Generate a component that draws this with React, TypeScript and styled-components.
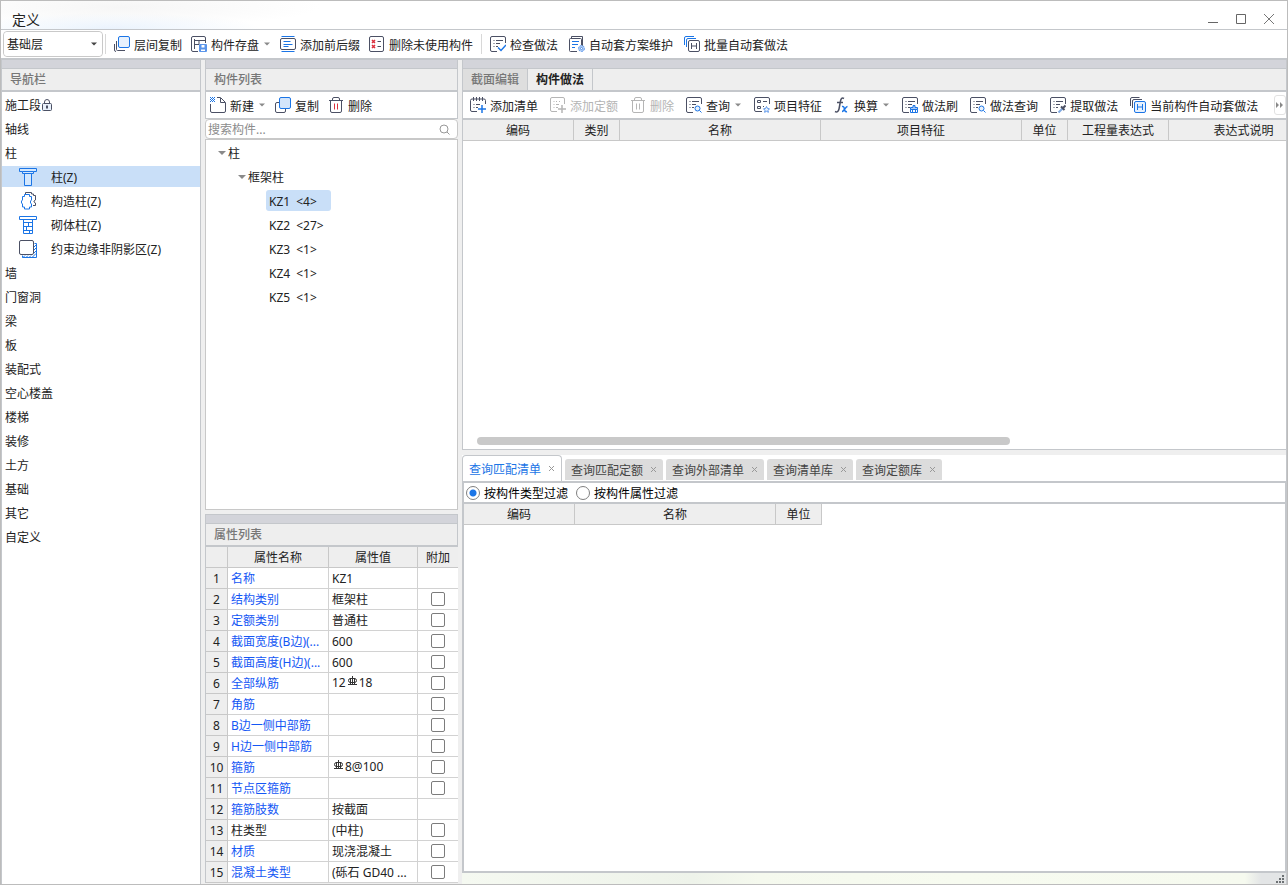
import React, { useState } from 'react';
import styled, { createGlobalStyle, css } from 'styled-components';

const ink = '#4b5064';
const blue = '#1b75e6';
const pale = '#d3e5fb';
const line = '#c4c7cb';
const grid = '#c8c8c8';
const panel = '#eeeeee';

const GlobalStyle = createGlobalStyle`
  *, *::before, *::after { box-sizing: border-box; }
  body {
    margin: 0;
    background: #fff;
    color: #222;
    font: 12px/20px "Noto Sans", "Noto Sans CJK SC", sans-serif;
  }
  button, input, select { font: inherit; color: inherit; }
  button { border: 0; padding: 0; background: none; cursor: pointer; white-space: nowrap; }
  ul { list-style: none; margin: 0; padding: 0; }
`;

/* ---------- window frame ---------- */

const Frame = styled.div`
  display: flex;
  flex-direction: column;
  min-height: 100vh;
  border: 1px solid #bcbcbc;
`;

const TitleBar = styled.header`
  display: flex;
  justify-content: space-between;
  align-items: flex-end;
  height: 29px;
  padding: 0 10px 0 11px;
  border-bottom: 1px solid ${line};
  background:
    radial-gradient(ellipse 150px 16px at 110px 28px, #eaf3fd, transparent),
    radial-gradient(ellipse 200px 20px at 120px 6px, #f6f6f6, transparent),
    #fff;
`;

const Title = styled.h1`
  margin: 0;
  font-size: 14px;
  line-height: 18px;
  font-weight: 400;
`;

const WindowButtons = styled.div`
  display: flex;
  gap: 12px;
  padding-bottom: 2px;
`;

const WindowButton = styled.button`
  display: grid;
  place-items: center;
  width: 16px;
  height: 16px;
`;

const Toolbar = styled.div<{ $height: number; $gap: number; $rule?: number; $pad: number }>`
  display: flex;
  align-items: center;
  flex: none;
  gap: ${(p) => p.$gap}px;
  height: ${(p) => p.$height}px;
  padding-left: ${(p) => p.$pad}px;
  border-bottom: ${(p) => p.$rule ?? 2}px solid ${line};
  background: #fff;
  overflow: hidden;
`;

const ToolGroup = styled.div<{ $gap: number }>`
  display: flex;
  gap: ${(p) => p.$gap}px;
  padding: 0 8px;
  border-left: 1px solid #d8d8d8;
`;

const Tool = styled.button`
  display: flex;
  align-items: center;
  flex: none;
  gap: 4px;
  height: 20px;
  &:disabled { color: #b4b4b4; cursor: default; }
  &:disabled svg { filter: grayscale(1); opacity: 0.42; }
`;

const ToolLabel = styled.span`
  padding-top: 3px;
`;

const Overflow = styled.button`
  display: grid;
  place-items: center;
  flex: none;
  width: 12px;
  height: 20px;
  margin-left: auto;
  border: 1px solid #e2e2e2;
  border-radius: 3px;
`;

const FloorPicker = styled.div`
  display: grid;
  align-items: center;
  width: 100px;
  height: 26px;
  border: 1px solid #c9c9c9;
  border-radius: 4px;
  margin-right: 2px;
  & > * { grid-area: 1 / 1; }
  & > svg { justify-self: end; margin-right: 4px; pointer-events: none; }
`;

const FloorSelect = styled.select`
  appearance: none;
  width: 100%;
  height: 24px;
  padding: 2px 3px 0;
  border: 0;
  border-radius: 4px;
  background: #fff;
`;

const Workspace = styled.main`
  display: grid;
  grid-template-columns: 199px 253px minmax(0, 1fr);
  column-gap: 4px;
  flex: 1;
  border: solid ${line};
  border-width: 0 1px;
  background: #efefef;
`;

const Column = styled.div`
  display: flex;
  flex-direction: column;
  min-width: 0;
`;

const Panel = styled.section<{ $grow?: number }>`
  display: flex;
  flex-direction: column;
  flex: ${(p) => (p.$grow ? `${p.$grow} 1 0` : 'none')};
  min-width: 0;
`;

const Strip = styled.div`
  flex: none;
  height: 9px;
  background: #d3d4da;
  border-bottom: 1px solid ${line};
`;

const PanelTitle = styled.h2`
  flex: none;
  height: 23px;
  margin: 0;
  padding-left: 8px;
  border-bottom: 2px solid ${line};
  background: ${panel};
  color: #777;
  font-size: 12px;
  line-height: 22px;
  font-weight: 500;
`;

/* ---------- navigation ---------- */

const NavPanel = styled(Panel)`
  border-right: 1px solid ${line};
  background: #fff;
`;

const NavList = styled.ul`
  padding-top: 1px;
`;

const Row = styled.li`
  display: flex;
  height: 24px;
  padding: 1px 0 2px;
`;

const NavItem = styled.button<{ $child?: boolean; $selected?: boolean }>`
  display: flex;
  align-items: center;
  width: 100%;
  padding-left: ${(p) => (p.$child ? 17 : 3)}px;
  gap: ${(p) => (p.$child ? 14 : 0)}px;
  background: ${(p) => (p.$selected ? '#c9dff8' : 'transparent')};
`;

const RowLabel = styled.span`
  padding-top: 2px;
`;

/* ---------- component list ---------- */

const Bordered = styled.div`
  border: solid ${line};
  border-width: 0 1px;
`;

const SearchBox = styled.label`
  display: flex;
  align-items: center;
  height: 20px;
  padding: 0 7px 0 2px;
  border: 1px solid ${grid};
  border-radius: 4px;
  background: #fff;
`;

const SearchInput = styled.input`
  flex: 1;
  min-width: 0;
  height: 18px;
  padding: 2px 0 0;
  border: 0;
  outline: 0;
  background: none;
  &::placeholder { color: #8c8c8c; opacity: 1; }
`;

const TreeArea = styled.div`
  flex: 1;
  padding-top: 1px;
  border: 1px solid ${grid};
  background: #fff;
`;

const TreeRow = styled.button<{ $indent: number; $leaf?: boolean; $selected?: boolean }>`
  display: flex;
  align-items: center;
  margin-left: ${(p) => p.$indent}px;
  padding: 0 14px 0 3px;
  gap: ${(p) => (p.$leaf ? 6 : 2)}px;
  border-radius: 3px;
  background: ${(p) => (p.$selected ? '#c9dff8' : 'transparent')};
`;

/* ---------- tables ---------- */

const TableWrap = styled.div`
  flex: 1;
  overflow: hidden;
  background: #fff;
`;

const Table = styled.table<{ $width?: number }>`
  table-layout: fixed;
  width: ${(p) => (p.$width ? `${p.$width}px` : '100%')};
  border-spacing: 0;
  background: #fff;
`;

const cell = css`
  height: 21px;
  padding: 2px 0 0;
  border: solid ${grid};
  border-width: 0 1px 1px 0;
  line-height: 18px;
  font-weight: 400;
  white-space: nowrap;
  overflow: hidden;
  text-overflow: ellipsis;
`;

const HeadCell = styled.th`
  ${cell}
  background: ${panel};
  text-align: center;
`;

const BodyCell = styled.td<{ $link?: boolean }>`
  ${cell}
  padding: 2px 3px 0;
  border-color: #d2d2d2;
  color: ${(p) => (p.$link ? '#1457f5' : 'inherit')};
`;

const CheckCell = styled.td`
  ${cell}
  padding: 0;
  border-color: #d2d2d2;
`;

const PropertyPanel = styled(Panel)`
  margin-top: 4px;
  padding-bottom: 1px;
  border-top: 1px solid ${line};
`;

const PropertyTable = styled(Table)`
  border-left: 1px solid ${line};
  tr > :last-child { border-right: 0; }
`;

const Check = styled.input`
  appearance: none;
  display: block;
  width: 14px;
  height: 14px;
  margin: 0 auto;
  border: 1px solid #7c7c7c;
  border-radius: 2px;
  background: #fff;
  &:checked { background: ${blue}; }
`;

/* ---------- right side ---------- */

const EditorPanel = styled(Panel)`
  border-left: 1px solid ${line};
  border-bottom: 1px solid ${line};
  background: #fff;
`;

const EditorTabs = styled.div`
  display: flex;
  flex: none;
  height: 23px;
  border-bottom: 2px solid ${line};
  background: ${panel};
`;

const EditorTab = styled.button<{ $active?: boolean }>`
  padding: 1px 8px 0;
  border-right: 1px solid ${line};
  background: ${(p) => (p.$active ? panel : '#dedede')};
  color: ${(p) => (p.$active ? '#222' : '#777')};
  font-weight: ${(p) => (p.$active ? 700 : 500)};
`;

const ScrollTrack = styled.div`
  flex: none;
  height: 12px;
  padding: 0 14px;
`;

const ScrollThumb = styled.div`
  width: 67%;
  height: 8px;
  border-radius: 4px;
  background: #c9c9c9;
`;

const QueryPanel = styled(Panel)`
  margin-top: 5px;
  background: #fff;
`;

const QueryTabs = styled.div`
  display: flex;
  align-items: flex-end;
  flex: none;
  gap: 3px;
  height: 26px;
`;

const QueryTab = styled.div<{ $active?: boolean }>`
  display: flex;
  align-items: center;
  padding-left: 6px;
  ${(p) =>
    p.$active
      ? css`
          height: 26px;
          border: 1px solid ${line};
          border-bottom: 0;
          border-radius: 4px 4px 0 0;
          color: ${blue};
        `
      : css`
          height: 21px;
          margin-bottom: 1px;
          border-radius: 3px 3px 0 0;
          background: #dcdcdc;
          color: #444;
        `}
`;

const TabLabel = styled.button`
  padding-top: 2px;
`;

const CloseTab = styled.button`
  display: grid;
  place-items: center;
  width: 20px;
  height: 20px;
`;

const QueryBody = styled.div`
  display: flex;
  flex-direction: column;
  flex: 1;
  border: 2px solid ${line};
  border-right-width: 1px;
`;

const FilterBar = styled.div`
  display: flex;
  flex: none;
  gap: 8px;
  height: 21px;
  padding-left: 2px;
  border-bottom: 2px solid ${line};
`;

const RadioLabel = styled.label`
  display: flex;
  align-items: center;
  gap: 4px;
  color: #000;
`;

const Radio = styled.input`
  appearance: none;
  width: 14px;
  height: 14px;
  margin: 0;
  border: 1px solid #808080;
  border-radius: 50%;
  background: #fff;
  &:checked { background: radial-gradient(circle, ${blue} 3px, #fff 4px); }
`;

const StatusStrip = styled.footer`
  display: flex;
  justify-content: flex-end;
  align-items: center;
  flex: none;
  height: 11px;
  padding-right: 2px;
  background: linear-gradient(90deg, #f5f9f1, #eef3ea 28%, #f5f9ee 36%, #f7fbf0 60%, #f6faef 95%, #e3e5e6 97%);
`;

/* ---------- icons ---------- */

const Svg = ({ size = 16, children }: { size?: number; children: React.ReactNode }) => (
  <svg width={size} height={size} viewBox={`0 0 ${size} ${size}`} fill="none" stroke={ink} aria-hidden="true">
    {children}
  </svg>
);

const Caret = ({ color = '#8a8a8a' }: { color?: string }) => (
  <svg width="8" height="6" viewBox="0 0 8 6" aria-hidden="true">
    <path d="M1 1.500h6L4 4.500z" fill={color} />
  </svg>
);

const TreeCaret = () => (
  <svg width="8" height="6" viewBox="0 0 8 6" aria-hidden="true">
    <path d="M0 1h8L4 5z" fill="#8a8a8a" />
  </svg>
);

const DocLines = () => <path d="M3.500 4.500h1M6 4.500h7M3.500 7.500h1M6 7.500h4M3.500 10.500h1M6 10.500h2" />;
const DocFrame = () => (
  <path d="M15.500 7V2A1.500 1.500 0 0 0 14 .5H2A1.500 1.500 0 0 0 .5 2v12A1.500 1.500 0 0 0 2 15.500h5" />
);

const icons = {
  layerCopy: (
    <Svg>
      <path d="M2.500 5v8.500a1 1 0 0 0 1 1H11M.5 8v6a1.500 1.500 0 0 0 1.500 1.500" />
      <rect x="4.500" y=".5" width="11" height="11" rx="1.500" fill="#e7f1fd" stroke={blue} />
    </Svg>
  ),
  copy: (
    <Svg>
      <path d="M4 5.500H2A1.500 1.500 0 0 0 .5 7v7A1.500 1.500 0 0 0 2 15.500h7a1.500 1.500 0 0 0 1.500-1.500v-2" />
      <rect x="4.500" y=".5" width="11" height="11" rx="1.500" fill={pale} stroke={blue} />
    </Svg>
  ),
  save: (
    <Svg>
      <path d="M14.500 7V2A1.500 1.500 0 0 0 13 .5H2A1.500 1.500 0 0 0 .5 2v12A1.500 1.500 0 0 0 2 15.500h5M3.500 3v10M3.500 4.500H14M3.500 8.500h4.500V5" />
      <rect x="8" y="8" width="8" height="8" rx="1" fill="#5b95ea" stroke="none" />
      <path d="M10.500 9h3v2.500h-3zM10 15v-1.500h4V15" fill="#fff" stroke="none" />
    </Svg>
  ),
  affix: (
    <Svg>
      <path d="M1.500 .5h13M1.500 15.500h13" stroke={blue} />
      <rect x=".5" y="2.500" width="15" height="11" rx="1.500" />
      <path d="M3.500 5.500h7M3.500 8.500h9M3.500 10.500h5" stroke={blue} />
    </Svg>
  ),
  unused: (
    <Svg>
      <rect x=".5" y=".5" width="14" height="15" rx="1.500" />
      <path d="M3 4l3 3M6 4L3 7M3 9l3 3M6 9l-3 3" stroke="#dc2f3c" strokeWidth="1.500" />
      <path d="M8.500 5.500H12M8.500 10.500H12" />
    </Svg>
  ),
  check: (
    <Svg>
      <DocFrame />
      <DocLines />
      <path d="M8 11.500l3 3 5-5.500" stroke={blue} strokeWidth="1.500" />
    </Svg>
  ),
  scheme: (
    <Svg>
      <path d="M2.500 2V.5h11v10" />
      <path d="M12.500 9V3.500a1 1 0 0 0-1-1h-10a1 1 0 0 0-1 1v11a1 1 0 0 0 1 1H8" />
      <path d="M3 5.500h7M3 8.500h6M3 11.500h3" stroke={blue} />
      <circle cx="12.500" cy="12.500" r="3" fill="#a9c9f5" stroke="#5d97ea" strokeDasharray="2 1" />
      <circle cx="12.500" cy="12.500" r="1" fill="#fff" stroke="#5d97ea" />
    </Svg>
  ),
  batch: (
    <Svg>
      <path d="M.5 9V2A1.500 1.500 0 0 1 2 .5h8M2.500 11V4A1.500 1.500 0 0 1 4 2.500h8" stroke={blue} />
      <rect x="4.500" y="4.500" width="11" height="11" rx="1.500" fill="#fff" />
      <path d="M7.500 7v6M12.500 7v6M7.500 10h5" />
    </Svg>
  ),
  create: (
    <Svg>
      <path d="M0 .5h5M0 2.500h5M0 4.500h5" stroke={blue} strokeDasharray="1 1" />
      <path d="M1 1.500h4M1 3.500h4" stroke={blue} strokeDasharray="1 1" />
      <path d="M.5 7v7A1.500 1.500 0 0 0 2 15.500h12a1.500 1.500 0 0 0 1.500-1.500V5.500L10.500 .5H7M10.500 1v4.500H15" />
    </Svg>
  ),
  trash: (
    <Svg>
      <path d="M1 3.500h14M4.500 3.500V2A1.500 1.500 0 0 1 6 .5h4A1.500 1.500 0 0 1 11.500 2v1.500M2.500 3.500V14A1.500 1.500 0 0 0 4 15.500h8a1.500 1.500 0 0 0 1.500-1.500V3.500" />
      <path d="M6.500 6.500v6M9.500 6.500v6" stroke="#dc2f3c" />
    </Svg>
  ),
  addList: (
    <Svg>
      <path d="M15.500 7V3.500A1.500 1.500 0 0 0 14 2H2A1.500 1.500 0 0 0 .5 3.500V13A1.500 1.500 0 0 0 2 14.500h5M3.500 0v4M6.500 0v4M9.500 0v4M12.500 0v4M3.500 7.500h1M6 7.500h4M3.500 10.500h1M6 10.500h2" />
      <path d="M12 8v8M8 12h8" stroke={blue} strokeWidth="1.500" />
    </Svg>
  ),
  addQuota: (
    <Svg>
      <path d="M14.500 7V2A1.500 1.500 0 0 0 13 .5H2A1.500 1.500 0 0 0 .5 2v11A1.500 1.500 0 0 0 2 14.500h5" />
      <path d="M3.500 4.500h1M6 4.500h1M9 4.500h1M3.500 7.500h1M6 7.500h3M3.500 10.500h1M6 10.500h2" />
      <path d="M12 8v8M8 12h8" strokeWidth="1.500" />
    </Svg>
  ),
  query: (
    <Svg>
      <DocFrame />
      <DocLines />
      <circle cx="11.500" cy="11.500" r="2.500" fill="#e7f1fd" stroke={blue} />
      <path d="M13.500 13.500l2 2" stroke={blue} />
    </Svg>
  ),
  feature: (
    <Svg>
      <path d="M15.500 7V2A1.500 1.500 0 0 0 14 .5H2A1.500 1.500 0 0 0 .5 2v11A1.500 1.500 0 0 0 2 14.500h6" />
      <path d="M3.500 3.500h3v2h-3zM3.500 9.500h3v2h-3zM9 4.500h4M9 9.500h1" />
      <path d="M12.500 9.500l1 2 2 .3-1.500 1.500.4 2-1.900-1-1.900 1 .4-2-1.500-1.500 2-.3z" fill="#e7f1fd" stroke="#5d97ea" />
    </Svg>
  ),
  formula: (
    <Svg>
      <path d="M10 1.500C8 .3 7 1.500 6.500 4L5 12c-.5 2.500-2 3.500-4 2.500M3 5.500h6" strokeWidth="1.500" />
      <path d="M8 9.500c2-.5 2 1 2.500 3s1 2.500 2.500 2M13.500 9.500c-2 0-3.500 5-5.500 5" stroke={blue} strokeWidth="1.500" />
    </Svg>
  ),
  brush: (
    <Svg>
      <DocFrame />
      <DocLines />
      <path d="M11 8.500h2v2h2.500v2h-7v-2H11z" fill="#a9c9f5" stroke={blue} />
      <path d="M8.500 12.500v3h7v-3M10.500 13v2M13.500 13v2" stroke={blue} />
    </Svg>
  ),
  extract: (
    <Svg>
      <DocFrame />
      <DocLines />
      <path d="M8.500 15.500l4-4" stroke="#7fa9e2" strokeWidth="2" />
      <path d="M11 9.500l3.500 3.500M13 11l2.500-2.500" strokeWidth="2" />
    </Svg>
  ),
  current: (
    <Svg>
      <path d="M.5 9V2A1.500 1.500 0 0 1 2 .5h7.500M2.500 11V4A1.500 1.500 0 0 1 4 2.500h8" />
      <rect x="4.500" y="4.500" width="11" height="11" rx="1.500" fill="#e7f1fd" stroke={blue} />
      <path d="M7.500 7v6M12.500 7v6M7.500 10h5" stroke={blue} />
    </Svg>
  ),
};

const Lock = () => (
  <svg width="12" height="12" viewBox="0 0 12 12" fill="none" stroke={ink} aria-hidden="true">
    <path d="M3.500 4.500V3a2.500 2.500 0 0 1 5 0v1.500" />
    <rect x="1.500" y="4.500" width="9" height="7" rx="1" fill="#e9f1fb" />
    <path d="M6 6.500v3" strokeWidth="2" />
  </svg>
);

const navIcons = {
  column: (
    <Svg size={18}>
      <g stroke={blue}>
        <path d="M.5 .5h17v3h-3v2h-11v-2h-3z" fill="#d3e7fd" />
        <path d="M5.500 5.500h7v12h-7zM3.500 3.500h11" fill="#d3e7fd" />
      </g>
    </Svg>
  ),
  structural: (
    <Svg size={18}>
      <path d="M6.500 2V.5h6V2h2v1.500h2V8L15 9v1l1.500 1v2.500H14" />
      <path d="M5.500 2.500h5v2h2v3.500l-1 1v2l1 1v3h-2v2h-5v-2h-2v-3l-1-1V9l1-1V4.500h2z" fill="#fff" stroke={blue} />
    </Svg>
  ),
  masonry: (
    <Svg size={18}>
      <g stroke={blue}>
        <path d="M.5 .5h17v3H.5zM4.500 4v13.500h9V4M4.500 6.500h9M4.500 10.500h9M4.500 14.500h9M9.500 6.500v4M7.500 10.500v4M10.500 14.500v3" />
      </g>
    </Svg>
  ),
  edge: (
    <Svg size={18}>
      <path d="M3.500 15.500v2h14v-14h-2M4 17.500l2-2M7 17.500l2-2M10 17.500l2-2M13 17.500l4-4M15 13l2.500-2.500M15 10l2.500-2.500M15 7l2.500-2.500" stroke={blue} />
      <rect x=".5" y=".5" width="14" height="14" rx="1.500" fill="#fff" />
    </Svg>
  ),
};

const Rebar = () => (
  <svg width="13" height="16" viewBox="0 0 13 16" fill="none" stroke="#333" role="img" aria-label="三级钢">
    <path d="M6.500 1v9M4.500 3v7M8.500 3v7M2 9.500h9" />
    <rect x="2.500" y="3.500" width="8" height="4" rx="2" />
  </svg>
);

const RebarText = styled.span`
  display: flex;
  align-items: center;
  height: 16px;
  margin-bottom: 2px;
`;

const CloseMark = () => (
  <svg width="7" height="7" viewBox="0 0 7 7" stroke="#999" aria-hidden="true">
    <path d="M1 1l5 5M6 1L1 6" />
  </svg>
);

/* ---------- data ---------- */

type IconName = keyof typeof icons;
type ToolSpec = { icon: IconName; label: string; menu?: boolean; disabled?: boolean };

const projectTools: ToolSpec[] = [
  { icon: 'layerCopy', label: '层间复制' },
  { icon: 'save', label: '构件存盘', menu: true },
  { icon: 'affix', label: '添加前后缀' },
  { icon: 'unused', label: '删除未使用构件' },
];
const methodTools: ToolSpec[] = [
  { icon: 'check', label: '检查做法' },
  { icon: 'scheme', label: '自动套方案维护' },
  { icon: 'batch', label: '批量自动套做法' },
];
const listTools: ToolSpec[] = [
  { icon: 'create', label: '新建', menu: true },
  { icon: 'copy', label: '复制' },
  { icon: 'trash', label: '删除' },
];
const editorTools: ToolSpec[] = [
  { icon: 'addList', label: '添加清单' },
  { icon: 'addQuota', label: '添加定额', disabled: true },
  { icon: 'trash', label: '删除', disabled: true },
  { icon: 'query', label: '查询', menu: true },
  { icon: 'feature', label: '项目特征' },
  { icon: 'formula', label: '换算', menu: true },
  { icon: 'brush', label: '做法刷' },
  { icon: 'query', label: '做法查询' },
  { icon: 'extract', label: '提取做法' },
  { icon: 'current', label: '当前构件自动套做法' },
];

const navItems: { label: string; icon?: keyof typeof navIcons; locked?: boolean }[] = [
  { label: '施工段', locked: true },
  { label: '轴线' },
  { label: '柱' },
  { label: '柱(Z)', icon: 'column' },
  { label: '构造柱(Z)', icon: 'structural' },
  { label: '砌体柱(Z)', icon: 'masonry' },
  { label: '约束边缘非阴影区(Z)', icon: 'edge' },
  ...['墙', '门窗洞', '梁', '板', '装配式', '空心楼盖', '楼梯', '装修', '土方', '基础', '其它', '自定义'].map(
    (label) => ({ label }),
  ),
];

const members = [
  ['KZ1', 4],
  ['KZ2', 27],
  ['KZ3', 1],
  ['KZ4', 1],
  ['KZ5', 1],
] as const;

const properties: { name: string; value?: React.ReactNode; plain?: boolean; noCheck?: boolean }[] = [
  { name: '名称', value: 'KZ1', noCheck: true },
  { name: '结构类别', value: '框架柱' },
  { name: '定额类别', value: '普通柱' },
  { name: '截面宽度(B边)(...', value: '600' },
  { name: '截面高度(H边)(...', value: '600' },
  { name: '全部纵筋', value: <RebarText>12<Rebar />18</RebarText> },
  { name: '角筋' },
  { name: 'B边一侧中部筋' },
  { name: 'H边一侧中部筋' },
  { name: '箍筋', value: <RebarText><Rebar />8@100</RebarText> },
  { name: '节点区箍筋' },
  { name: '箍筋肢数', value: '按截面', noCheck: true },
  { name: '柱类型', value: '(中柱)', plain: true },
  { name: '材质', value: '现浇混凝土' },
  { name: '混凝土类型', value: '(砾石 GD40 ...' },
];

const editorColumns: [string, number][] = [
  ['编码', 111],
  ['类别', 46],
  ['名称', 201],
  ['项目特征', 201],
  ['单位', 46],
  ['工程量表达式', 101],
  ['表达式说明', 150],
];
const queryColumns: [string, number][] = [
  ['编码', 111],
  ['名称', 201],
  ['单位', 46],
];
const queryTabs = ['查询匹配清单', '查询匹配定额', '查询外部清单', '查询清单库', '查询定额库'];

const Tools = ({ items }: { items: ToolSpec[] }) => (
  <>
    {items.map((t) => (
      <Tool key={t.label} disabled={t.disabled} aria-haspopup={t.menu ? 'menu' : undefined}>
        {icons[t.icon]}
        <ToolLabel>{t.label}</ToolLabel>
        {t.menu && <Caret />}
      </Tool>
    ))}
  </>
);

const HeaderTable = ({ columns }: { columns: [string, number][] }) => (
  <Table $width={columns.reduce((sum, c) => sum + c[1], 0)}>
    <colgroup>
      {columns.map(([name, width]) => (
        <col key={name} width={width} />
      ))}
    </colgroup>
    <thead>
      <tr>
        {columns.map(([name]) => (
          <HeadCell key={name} scope="col">{name}</HeadCell>
        ))}
      </tr>
    </thead>
  </Table>
);

export default function App() {
  const [nav, setNav] = useState('柱(Z)');
  const [member, setMember] = useState('KZ1');
  const [tab, setTab] = useState(queryTabs[0]);
  const [filter, setFilter] = useState('按构件类型过滤');

  return (
    <Frame>
      <GlobalStyle />
      <TitleBar>
        <Title>定义</Title>
        <WindowButtons>
          <WindowButton aria-label="最小化">
            <svg width="12" height="12" viewBox="0 0 12 12" stroke="#666"><path d="M1 9.500h10" /></svg>
          </WindowButton>
          <WindowButton aria-label="最大化">
            <svg width="12" height="12" viewBox="0 0 12 12" stroke="#666" fill="none"><path d="M1.500 1.500h9v9h-9z" /></svg>
          </WindowButton>
          <WindowButton aria-label="关闭">
            <svg width="12" height="12" viewBox="0 0 12 12" stroke="#777"><path d="M1 1l10 10M11 1L1 11" /></svg>
          </WindowButton>
        </WindowButtons>
      </TitleBar>

      <Toolbar $height={30} $gap={0} $pad={2}>
        <FloorPicker>
          <FloorSelect aria-label="楼层" defaultValue="基础层">
            <option>基础层</option>
          </FloorSelect>
          <Caret color="#444" />
        </FloorPicker>
        <ToolGroup $gap={9}><Tools items={projectTools} /></ToolGroup>
        <ToolGroup $gap={11}><Tools items={methodTools} /></ToolGroup>
      </Toolbar>

      <Workspace>
        <NavPanel as="nav" $grow={1}>
          <Strip />
          <PanelTitle>导航栏</PanelTitle>
          <NavList>
            {navItems.map((item) => (
              <Row key={item.label}>
                <NavItem $child={!!item.icon} $selected={nav === item.label} onClick={() => setNav(item.label)}>
                  {item.icon && navIcons[item.icon]}
                  <RowLabel>{item.label}</RowLabel>
                  {item.locked && <Lock />}
                </NavItem>
              </Row>
            ))}
          </NavList>
        </NavPanel>

        <Column>
          <Panel $grow={1}>
            <Bordered>
              <Strip />
              <PanelTitle>构件列表</PanelTitle>
              <Toolbar $height={27} $gap={9} $rule={1} $pad={4}><Tools items={listTools} /></Toolbar>
            </Bordered>
            <SearchBox>
              <SearchInput type="text" placeholder="搜索构件..." aria-label="搜索构件" />
              <svg width="11" height="11" viewBox="0 0 11 11" fill="none" stroke="#999" aria-hidden="true">
                <circle cx="5" cy="5" r="4" />
                <path d="M8 8l2.500 2.500" />
              </svg>
            </SearchBox>
            <TreeArea>
              <ul>
                <Row><TreeRow $indent={9}><TreeCaret /><RowLabel>柱</RowLabel></TreeRow></Row>
                <Row><TreeRow $indent={29}><TreeCaret /><RowLabel>框架柱</RowLabel></TreeRow></Row>
                {members.map(([name, count]) => (
                  <Row key={name}>
                    <TreeRow $indent={60} $leaf $selected={member === name} onClick={() => setMember(name)}>
                      <RowLabel>{name}</RowLabel>
                      <RowLabel>&lt;{count}&gt;</RowLabel>
                    </TreeRow>
                  </Row>
                ))}
              </ul>
            </TreeArea>
          </Panel>

          <PropertyPanel>
            <Bordered>
              <Strip />
              <PanelTitle>属性列表</PanelTitle>
            </Bordered>
            <PropertyTable>
              <colgroup>
                <col width="22" />
                <col width="101" />
                <col width="89" />
                <col />
              </colgroup>
              <thead>
                <tr>
                  <HeadCell aria-label="序号" />
                  <HeadCell scope="col">属性名称</HeadCell>
                  <HeadCell scope="col">属性值</HeadCell>
                  <HeadCell scope="col">附加</HeadCell>
                </tr>
              </thead>
              <tbody>
                {properties.map((p, i) => (
                  <tr key={p.name}>
                    <HeadCell scope="row">{i + 1}</HeadCell>
                    <BodyCell $link={!p.plain}>{p.name}</BodyCell>
                    <BodyCell>{p.value}</BodyCell>
                    <CheckCell>{!p.noCheck && <Check type="checkbox" aria-label={`附加 ${p.name}`} />}</CheckCell>
                  </tr>
                ))}
              </tbody>
            </PropertyTable>
          </PropertyPanel>
        </Column>

        <Column>
          <EditorPanel $grow={27}>
            <Strip />
            <EditorTabs role="tablist">
              <EditorTab role="tab" aria-selected={false}>截面编辑</EditorTab>
              <EditorTab role="tab" aria-selected $active>构件做法</EditorTab>
            </EditorTabs>
            <Toolbar $height={28} $gap={12} $pad={7}>
              <Tools items={editorTools} />
              <Overflow aria-label="更多">
                <svg width="8" height="6" viewBox="0 0 8 6" fill="#888"><path d="M0 0l3 3-3 3zM4 0l3 3-3 3z" /></svg>
              </Overflow>
            </Toolbar>
            <TableWrap><HeaderTable columns={editorColumns} /></TableWrap>
            <ScrollTrack><ScrollThumb /></ScrollTrack>
          </EditorPanel>

          <QueryPanel $grow={29}>
            <QueryTabs role="tablist">
              {queryTabs.map((name) => (
                <QueryTab key={name} $active={tab === name}>
                  <TabLabel role="tab" aria-selected={tab === name} onClick={() => setTab(name)}>{name}</TabLabel>
                  <CloseTab aria-label={`关闭${name}`}><CloseMark /></CloseTab>
                </QueryTab>
              ))}
            </QueryTabs>
            <QueryBody>
              <FilterBar>
                {['按构件类型过滤', '按构件属性过滤'].map((name) => (
                  <RadioLabel key={name}>
                    <Radio type="radio" name="filter" checked={filter === name} onChange={() => setFilter(name)} />
                    <RowLabel>{name}</RowLabel>
                  </RadioLabel>
                ))}
              </FilterBar>
              <TableWrap><HeaderTable columns={queryColumns} /></TableWrap>
            </QueryBody>
          </QueryPanel>
          <StatusStrip>
            <svg width="8" height="8" viewBox="0 0 8 8" fill="#6d7174" aria-hidden="true">
              <path d="M6 0h2v2H6zM3 3h2v2H3zM6 3h2v2H6zM0 6h2v2H0zM3 6h2v2H3zM6 6h2v2H6z" />
            </svg>
          </StatusStrip>
        </Column>
      </Workspace>
    </Frame>
  );
}
